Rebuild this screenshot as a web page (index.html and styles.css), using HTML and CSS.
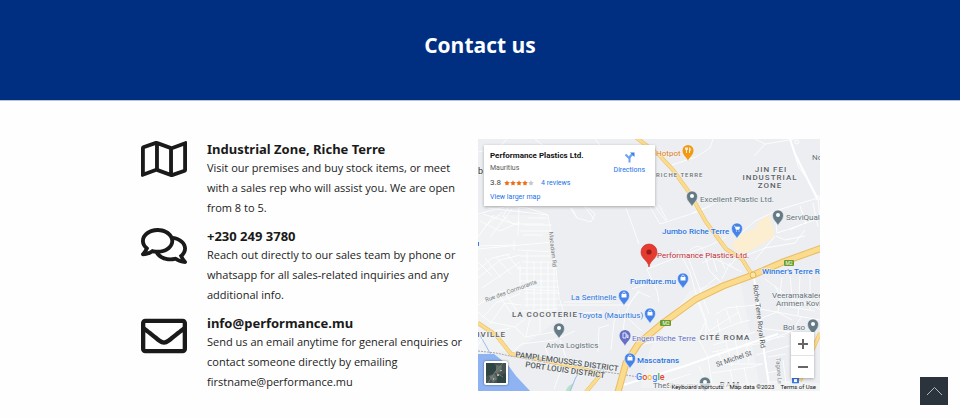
FILE: index.html
```
<!DOCTYPE html>
<html lang="en">
<head>
<meta charset="utf-8">
<meta name="viewport" content="width=device-width, initial-scale=1">
<title>Contact us</title>
<link rel="stylesheet" href="styles.css">
</head>
<body>
<header class="banner"><h1>Contact us</h1></header>
<main class="contact">
  <div class="details">
    <section class="item">
      <svg class="icon" viewBox="0 32 576 448" aria-hidden="true"><path d="M560.02 32c-1.96 0-3.98.37-5.96 1.16L384.01 96H384L212 35.28A64.252 64.252 0 0 0 191.76 32c-6.69 0-13.37 1.05-19.81 3.14L20.12 87.95A32.006 32.006 0 0 0 0 117.66v346.32C0 473.17 7.53 480 15.99 480c1.96 0 3.97-.37 5.96-1.16L192 416l172 60.71a63.98 63.98 0 0 0 40.05.15l151.83-52.81A31.996 31.996 0 0 0 576 394.34V48.02c0-9.19-7.53-16.02-15.98-16.02zM224 90.42l128 45.19v285.97l-128-45.19V90.42zM48 418.05V129.07l128-44.53v286.2l-.64.23L48 418.05zm480-35.13l-128 44.53V141.26l.64-.24L528 93.95v288.97z"/></svg>
      <div class="text">
        <h2>Industrial Zone, Riche Terre</h2>
        <p>Visit our premises and buy stock items, or meet with a sales rep who will assist you. We are open from 8 to 5.</p>
      </div>
    </section>
    <section class="item">
      <svg class="icon" viewBox="0 32 576 448" aria-hidden="true"><path d="M532 386.2c27.5-27.1 44-61.1 44-98.2 0-80-76.5-146.1-176.2-157.9C368.3 72.5 294.3 32 208 32 93.1 32 0 103.6 0 192c0 37 16.5 71 44 98.2-15.3 30.7-37.3 54.5-37.7 54.9-6.3 6.7-8.1 16.5-4.4 25 3.6 8.5 12 14 21.2 14 53.5 0 96.7-20.2 125.2-38.8 9.2 2.1 18.7 3.7 28.4 4.9C208.1 407.6 281.8 448 368 448c20.8 0 40.8-2.4 59.8-6.8C456.3 459.7 499.4 480 553 480c9.2 0 17.5-5.5 21.2-14 3.6-8.5 1.9-18.3-4.4-25-.4-.3-22.5-24.1-37.8-54.8zm-392.8-92.3L122.1 305c-14.1 9.1-28.5 16.3-43.1 21.4 2.7-4.7 5.4-9.7 8-14.8l15.5-31.1L77.7 256C64.2 242.6 48 220.7 48 192c0-60.7 73.3-112 160-112s160 51.3 160 112-73.3 112-160 112c-16.5 0-33-1.9-49-5.6l-19.8-4.5zM498.3 352l-24.7 24.4 15.5 31.1c2.6 5.1 5.3 10.1 8 14.8-14.6-5.1-29-12.3-43.1-21.4l-17.1-11.1-19.9 4.6c-16 3.7-32.5 5.6-49 5.6-54 0-102.2-20.1-131.3-49.7C338 339.5 416 272.9 416 192c0-3.4-.4-6.7-.7-10C479.7 196.5 528 238.8 528 288c0 28.7-16.2 50.6-29.7 64z"/></svg>
      <div class="text">
        <h2>+230 249 3780</h2>
        <p>Reach out directly to our sales team by phone or whatsapp for all sales-related inquiries and any additional info.</p>
      </div>
    </section>
    <section class="item">
      <svg class="icon icon-mail" viewBox="0 64 512 384" aria-hidden="true"><path d="M464 64H48C21.49 64 0 85.49 0 112v288c0 26.51 21.49 48 48 48h416c26.51 0 48-21.49 48-48V112c0-26.51-21.49-48-48-48zm0 48v40.805c-22.422 18.259-58.168 46.651-134.587 106.49-16.841 13.247-50.201 45.072-73.413 44.701-23.208.375-56.579-31.459-73.413-44.701C106.18 199.465 70.425 171.067 48 152.805V112h416zM48 400V214.398c22.914 18.251 55.409 43.862 104.938 82.646 21.857 17.205 60.134 55.186 103.062 54.955 42.717.231 80.509-37.199 103.053-54.947 49.528-38.783 82.032-64.401 104.947-82.653V400H48z"/></svg>
      <div class="text">
        <h2>info@performance.mu</h2>
        <p>Send us an email anytime for general enquiries or contact someone directly by emailing firstname@performance.mu</p>
      </div>
    </section>
  </div>

  <div class="map">
    <svg class="map-canvas" viewBox="478 139 342 252" preserveAspectRatio="xMidYMid slice" role="img" aria-label="Map of Riche Terre, Mauritius">
      <defs>
        <g id="pin"><path d="M0 9C-1 5-5.500 3.500-5.500-1.500a5.500 5.500 0 0 1 11 0C5.500 3.500 1 5 0 9z"/></g>
        <g id="bag" fill="#fff"><path d="M-2.500-2h5v3.500h-5z"/><path d="M-1.300-2v-.6a1.300 1.300 0 0 1 2.600 0v.6" fill="none" stroke="#fff" stroke-width=".7"/></g>
      </defs>
      <rect x="478" y="139" width="342" height="252" fill="#eceef1"/>
      <path d="M478 215h70l8 60 2 45-40 30-40 4zM690 290l50-12 20 110h-120l10-40z" fill="#f0f2f3"/>
      <path d="M739 235l17-7 1-5 12-9 5 17 0 6-29 17-6-2-8-6z" fill="#fbeed1"/>
      <path d="M478 354h16l14 11 8 11 15 16h-53z" fill="#8fb3f2"/>
      <path d="M566 391c1-5 4-6 8-8l-3 8z" fill="#b9e3c8"/>
      <path class="stream" d="M478 332l7 12 6 11M604 370l-18-6-10 13-6 14"/>

      <g class="street">
        <path d="M478 152l20-4 9-9M535 139l10 8M595 139l5 6M478 214l30-8 20 2 20 7 2 12 5 33 4 38M548 215l-60-7M519 206l-1 30M509 206l-6 10 10 8 30 0M478 237l16-22M483 214l35 11M480 221l20 10 20-9M485 226l18-14M490 237l22-28M528 218l18 0M524 225l28 0M520 231l32 0M523 235l20 0M478 249l75-7M478 246l36-1M514 241v9"/>
        <path d="M518 250l37 2M520 256h34M522 262h34M517 268h40M519 274h38M519 281h39M521 287h38M524 293h36M524 299h36M524 305h36M520 265v28M527 252v55M534 262v48M541 262v52M548 262v50M554 252v58M522 311l36-2"/>
        <path d="M478 270l14-12 18-4M478 278l22-18 20-5M482 288l38-26M478 262l14 14M485 258l16 20M496 257l15 17M507 255l14 16M478 305l20-13 20-3 40 2M482 318l15-16 23-8M490 324l15-21 17 2M478 312l12 10 25 5 10-8M498 294l14 20M504 292l14 20M515 327l10 10 35-6 4-18M530 318l-4 18M540 313v20M560 300l4 14 38-2M564 302h46M559 305h70l10-15"/>
        <path d="M570 208l7 10 14 4 4-8-9-8M577 218l-5-10M584 206l10 13M626 208l8 22 5 14 0 0-2-4M650 207l10 17 40-13 22-12M667 220l-8-15M710 206l-18 7M672 165l24-8 14-9 3-9M652 202l14 19M647 269l42-16 22-8 15-8M647 269l10 22 2 11M652 282l-20 7M678 250l12 22 6 22 10 26 0 15M687 254l22 60M690 250c6-5 12-5 14 2l5 18 10 10M702 263l11-5 20 9M713 258l4 14M719 255l6 14M730 263l-8 16M701 290l15-12M724 286l-13-14M650 297l-11-5-8 9-6 14-3 25"/>
        <path d="M795 139l-30 5-11 12M765 144l-10-5M792 144l6 22 10 14 10 18M818 198l-40 12-23 11-16 14M818 198l2 20M775 213l2 20 24-8M790 230l10-5 18-6M742 257l23-9 10-12M755 260l10-12 30-5 10-13M776 236l9 4 20-4M800 206l6 18M813 203l5 24M740 253l-10 13 12 6"/>
        <path d="M598 352l1-24 10-3M611 350l3-28 5-12M622 313l20 18M640 345l46-10M697 300l12 31 30-19M706 320l-6 14M716 314l10-6 30-3M708 335l30-12 12-3M713 345l30-9 12-4M717 319l3 13M726 309l5 14M736 305l6 18M699 340l9 17 5 34M708 357l-18 7-70 22M690 374l-30 10M699 366l9 20M717 350l6 14 40 0M712 352l50-9M735 338l4 25M726 342l6 24M745 333l4 30M712 373l40-6 10-3M730 369l5 22M744 367l5 24M762 343l30-12 10-15M757 320l20-8 15 8M756 355l36-10M758 328l34 4"/>
        <path d="M754 279l6 40 4 34 6 38M765 279l24 18 31 12M775 286l10 20 30 5M782 277l-4 35M790 276l3 30M800 276l-2 40M810 270v40M760 309l60 11M765 340l20-4M768 357l18-3M766 373l12-2M783 360l4 31M770 382h20M562 367l-8 22M478 345l8-12 24-5M511 354l10-10 34-4 20-9M560 340l8 24M545 346l5 16"/>
      </g>
      <path class="avenue" d="M754 278l5 31 6 50 5 32M620 386l65-20 28-10 35-12 30-10M790 139l5 15 13 26 9 18"/>
      <circle cx="797" cy="142" r="2" fill="none" stroke="#fff"/><circle cx="818" cy="198" r="2" fill="none" stroke="#fff"/>
      <path class="boundary" d="M478 351l18 2 14 3 40 7 36 6 34 5 24 4"/>

      <g class="road-edge">
        <path d="M478 323l18 12 15 19 32 6 33 7 25 7-15 18M820 333l-8 18-12 30M634 136l24 18 15 16 16 22 17 30 20 27 16 10 10 16"/>
        <path class="trunk" d="M822 248l-39 14-30 13-30 11-27 13-33 24-24 20-13 20-8 29"/>
      </g>
      <g class="road">
        <path d="M478 323l18 12 15 19 32 6 33 7 25 7-15 18M820 333l-8 18-12 30M634 136l24 18 15 16 16 22 17 30 20 27 16 10 10 16"/>
        <path class="trunk" d="M822 248l-39 14-30 13-30 11-27 13-33 24-24 20-13 20-8 29"/>
      </g>
      <circle cx="753" cy="275" r="3" fill="#f8e4ad" stroke="#e8b64c"/>

      <g class="shield"><rect x="784" y="260" width="10" height="6" rx="1"/><text x="789" y="265">M2</text><rect x="660" y="320" width="11" height="6" rx="1"/><text x="666" y="325">M2</text></g>

      <g class="area">
        <text x="771" y="172">JIN FEI</text><text x="770" y="180">INDUSTRIAL</text><text x="770" y="188">ZONE</text>
        <text x="545" y="317">LA COCOTERIE</text><text x="725" y="340">CITÉ ROMA</text><text x="490" y="337">HVILLE</text><text x="730" y="387">RAM</text>
      </g>
      <text class="village" x="656" y="177">RICHE TERRE</text>
      <text class="district" x="515" y="357" transform="rotate(8 515 357)">PAMPLEMOUSSES DISTRICT</text>
      <text class="district" x="525" y="367" transform="rotate(8 525 367)">PORT LOUIS DISTRICT</text>
      <text class="street-name" x="549" y="232" transform="rotate(84 549 232)">Macadam Rd</text>
      <text class="street-name" x="486" y="302" transform="rotate(-20 486 302)">Rue des Cormorants</text>
      <text class="street-name large" x="753" y="285" transform="rotate(83 753 285)">Riche Terre Royal Rd</text>
      <text class="street-name large" x="717" y="367" transform="rotate(-19 717 367)">St Michel St</text>
      <text class="street-name" x="776" y="358" transform="rotate(86 776 358)">Tagore Ln</text>

      <g class="place grey">
        <text x="700" y="202">Excellent Plastic Ltd.</text><text x="786" y="220">ServiQual</text><text x="546" y="348">Ariva Logistics</text>
        <text x="772" y="298">Veeramakaleeamen</text><text x="776" y="306">Ammen Kovil</text><text x="783" y="330">Bol so</text><text x="653" y="388">TheShop mu</text>
        <text x="812" y="160">No</text>
      </g>
      <g class="place orange"><text x="656" y="156">Hotpot</text></g>
      <g class="place blue">
        <text x="662" y="234">Jumbo Riche Terre</text><text x="630" y="284">Furniture.mu</text><text class="light" x="571" y="300">La Sentinelle</text>
        <text class="light" x="578" y="318">Toyota (Mauritius)</text><text x="637" y="363">Mascatrans</text><text x="762" y="274">Winner's Terre Rouge</text>
      </g>
      <g class="place violet"><text x="632" y="341">Engen Riche Terre</text></g>
      <g class="place red"><text x="657" y="258">Performance Plastics Ltd.</text></g>
      <text class="edge-text" x="478" y="174">b</text>

      <g fill="#647b86" stroke="#fff" stroke-width=".5">
        <use href="#pin" x="692" y="198"/><use href="#pin" x="778" y="217"/><use href="#pin" x="559" y="330"/><use href="#pin" x="813" y="326"/><use href="#pin" x="705" y="384"/>
      </g>
      <g fill="#fff"><circle cx="692" cy="196" r="2"/><circle cx="778" cy="215" r="2"/><circle cx="559" cy="328" r="2"/><circle cx="813" cy="324" r="2"/><circle cx="705" cy="382" r="2"/></g>
      <use href="#pin" x="688" y="152" fill="#f29a10"/>
      <path d="M686.500 147.500v5.500M685.500 147.500v2h2v-2M689.500 147.500v5.500M689.500 148c1.500 0 1.500 3 0 3" fill="none" stroke="#fff" stroke-width=".8"/>
      <g fill="#4683e8" stroke="#fff" stroke-width=".5">
        <use href="#pin" x="737" y="230"/><use href="#pin" x="683" y="280"/><use href="#pin" x="624" y="297"/><use href="#pin" x="650" y="315"/><use href="#pin" x="630" y="360"/>
      </g>
      <path d="M734 226h1l1 3.500h3l.8-2.500H736" fill="#fff" stroke="#fff" stroke-width=".6"/><circle cx="736.500" cy="231" r=".6" fill="#fff"/><circle cx="739" cy="231" r=".6" fill="#fff"/>
      <use href="#bag" x="683" y="279"/><use href="#bag" x="624" y="296"/><use href="#bag" x="650" y="314"/><use href="#bag" x="630" y="359"/>
      <use href="#pin" x="625" y="337" fill="#6570c8"/>
      <path d="M623 333h3v5h-3zM627 334v3l1 1v-3" fill="none" stroke="#fff" stroke-width=".8"/>
      <path d="M649 267c-1-7-8-8-8-15a8 8 0 0 1 16 0c0 7-7 8-8 15z" fill="#e53b30" stroke="#c5281f" stroke-width=".6"/><circle cx="649" cy="252" r="2.600" fill="#951d17"/>
      <rect x="792" y="377" width="7" height="7" rx="1" fill="#3c79e6"/><path d="M794 379h3v3h-3z" fill="#fff"/>
      <path d="M478 242v4" stroke="#3c79e6" stroke-width="2"/>
      <text class="google" x="636" y="380"><tspan fill="#4285f4">G</tspan><tspan fill="#ea4335">o</tspan><tspan fill="#fbbc05">o</tspan><tspan fill="#4285f4">g</tspan><tspan fill="#34a853">l</tspan><tspan fill="#ea4335">e</tspan></text>
    </svg>

    <div class="card">
      <div class="card-main">
        <strong>Performance Plastics Ltd.</strong>
        <span class="address">Mauritius</span>
        <div class="rating">
          <span class="score">3.8</span>
          <svg class="stars" viewBox="0 0 60 12" role="img" aria-label="3.8 out of 5 stars">
            <defs><path id="star" d="M6 .5l1.700 3.600 3.900.5-2.900 2.700.8 3.900L6 9.300l-3.500 1.900.8-3.900L.4 4.600l3.900-.5z"/></defs>
            <g fill="#e7711b"><use href="#star"/><use href="#star" x="12"/><use href="#star" x="24"/><use href="#star" x="36"/></g><use href="#star" x="48" fill="#c4c8cc"/>
          </svg>
          <a href="#reviews">4 reviews</a>
        </div>
        <a href="#larger">View larger map</a>
      </div>
      <a class="directions" href="#directions">
        <svg viewBox="0 0 22 22" aria-hidden="true"><path d="M11 21v-8L3 5M11 13c0-4 2-6 6-8" fill="none" stroke="#6ba2f3" stroke-width="4"/><path d="M12 1h9v9z" fill="#3e7fe0"/></svg>
        Directions
      </a>
    </div>

    <button class="satellite" type="button" aria-label="Show satellite imagery">
      <svg viewBox="0 0 20 20" aria-hidden="true"><path fill="#46524f" d="M0 0h20v20H0z"/><path fill="#2f4544" d="M0 0h8l3 6-4 5-7 2zM12 13l8-3v10h-9z"/><path fill="#66706b" d="M10 2l6 1-1 6-5 1zM3 13l6-2 2 5-4 4z"/><path d="M2 20L9 9l8-9M9 9l8 5M4 14l6 2" fill="none" stroke="#7d8785" stroke-width=".7"/><path fill="#b4aca7" d="M11 11h2v2h-2zM14 7h2v1h-2zM7 15h1v2H7z"/></svg>
    </button>

    <div class="zoom">
      <button type="button" aria-label="Zoom in"><svg viewBox="0 0 12 12" aria-hidden="true"><path d="M6 1v10M1 6h10"/></svg></button>
      <button type="button" aria-label="Zoom out"><svg viewBox="0 0 12 12" aria-hidden="true"><path d="M1 6h10"/></svg></button>
    </div>

    <div class="legal"><button type="button">Keyboard shortcuts</button><span>Map data ©2023</span><a href="#terms">Terms of Use</a></div>
  </div>
</main>
<button class="to-top" type="button" aria-label="Back to top"><svg viewBox="0 0 28 28" aria-hidden="true"><path d="M7 18l7.500-7.500L22 18"/></svg></button>
</body>
</html>
```
FILE: styles.css
```
* { box-sizing: border-box; }

body {
  margin: 0;
  background: #fefefe;
  color: #1a1a1a;
  font-family: "Segoe UI", "Open Sans", "Noto Sans", sans-serif;
}

button { padding: 0; border: 0; font: inherit; color: inherit; cursor: pointer; }
a { color: #1a73e8; text-decoration: none; }

.banner {
  display: flex;
  align-items: center;
  justify-content: center;
  padding: 30px 20px 40px;
  background: #002f82;
  border-bottom: 1px solid #b9c3de;
}
.banner h1 { margin: 0; color: #fff; font-size: 21px; line-height: 30px; font-weight: 700; }

.contact {
  display: grid;
  grid-template-columns: minmax(0, 1fr) minmax(0, 342px);
  align-items: start;
  max-width: 960px;
  margin: 0 auto;
  padding: 38px 140px 26px 141px;
}

.details { display: grid; gap: 9px; padding: 1px 12px 0 0; }
.item { display: flex; align-items: flex-start; gap: 20px; }
.icon { flex: none; width: 46px; height: 36px; margin-top: 1px; fill: #1a1a1a; }
.icon-mail { margin-top: 4px; }
.text h2 { margin: 0; font-family: "Segoe UI", "Noto Sans", sans-serif; font-size: 13px; line-height: 18px; font-weight: 700; }
.text p { margin: 0; font-size: 11px; line-height: 20px; color: #222; }

.map {
  position: relative;
  overflow: hidden;
  font-family: Roboto, "Liberation Sans", sans-serif;
  font-size: 7px;
}
.map-canvas { display: block; width: 100%; height: auto; font-family: Roboto, sans-serif; }

.street { fill: none; stroke: #fff; stroke-width: 1; opacity: .85; }
.avenue { fill: none; stroke: #fff; stroke-width: 2; }
.stream { fill: none; stroke: #9dbcf3; stroke-width: 1; }
.boundary { fill: none; stroke: #a3a7ab; stroke-width: 1; stroke-dasharray: 2 1; }
.road-edge { fill: none; stroke: #e9bd62; stroke-width: 4; }
.road { fill: none; stroke: #fbdb8e; stroke-width: 3; }
.road-edge .trunk { stroke-width: 7; }
.road .trunk { stroke-width: 5; }
.shield { fill: #6a9c2f; }
.shield text { fill: #fff; font-size: 5px; text-anchor: middle; }

.map-canvas text { paint-order: stroke; stroke: #f4f6f7; stroke-width: 1px; stroke-linejoin: round; }
.map-canvas .shield text { stroke: none; }
.area { fill: #5b6066; font-size: 8px; font-weight: 500; letter-spacing: 1px; text-anchor: middle; }
.village { fill: #6a6f75; font-size: 6px; font-weight: 500; letter-spacing: 1px; }
.district { fill: #55595e; font-size: 8px; font-weight: 500; }
.street-name { fill: #74787d; font-size: 6px; }
.street-name.large { fill: #505459; font-size: 7px; }
.place { font-size: 8px; }
.grey { fill: #647079; }
.orange { fill: #e07b13; }
.blue { fill: #2a74e0; font-weight: 500; }
.light { font-weight: 400; }
.violet { fill: #6570c8; }
.red { fill: #c52c35; }
.edge-text { fill: #333; font-size: 9px; }
.google { font-size: 9px; font-weight: 500; }

.card {
  position: absolute;
  top: 6px;
  left: 6px;
  display: flex;
  justify-content: space-between;
  width: 50%;
  padding: 5px 10px 2px 6px;
  background: #fff;
  box-shadow: 0 1px 3px rgb(0 0 0 / 30%);
}
.card-main { display: grid; line-height: 13px; }
.card-main strong { font-size: 8px; font-weight: 700; color: #111; line-height: 12px; }
.address { color: #5b5b5b; }
.rating { display: flex; align-items: center; gap: 3px; line-height: 16px; }
.rating a { margin-left: 4px; }
.score { font-size: 8px; color: #444; }
.stars { width: 30px; height: 6px; }
.directions { display: flex; flex-direction: column; align-items: center; gap: 3px; line-height: 9px; padding-top: 2px; }
.directions svg { width: 11px; height: 11px; }

.satellite {
  position: absolute;
  left: 6px;
  bottom: 6px;
  width: 24px;
  height: 24px;
  border: 2px solid #fff;
  border-radius: 2px;
  overflow: hidden;
  box-shadow: 0 0 2px rgb(0 0 0 / 60%);
}
.satellite svg { display: block; width: 100%; height: 100%; }

.zoom {
  position: absolute;
  right: 6px;
  bottom: 13px;
  display: grid;
  width: 23px;
  background: #fff;
  box-shadow: 0 1px 3px rgb(0 0 0 / 30%);
}
.zoom button { display: grid; place-items: center; height: 23px; background: none; }
.zoom button + button { border-top: 1px solid #e3e3e3; }
.zoom svg { width: 12px; height: 12px; fill: none; stroke: #666; stroke-width: 2; }

.legal {
  position: absolute;
  right: 0;
  bottom: 0;
  display: flex;
  gap: 6px;
  padding: 0 4px 0 2px;
  line-height: 8px;
  font-size: 6px;
  color: #111;
  background: rgb(245 245 245 / 70%);
}
.legal button { background: none; }
.legal a { color: inherit; }

.to-top {
  position: fixed;
  right: 12px;
  bottom: 13px;
  width: 28px;
  height: 28px;
  background: #2b333d;
}
.to-top svg { display: block; width: 28px; height: 28px; fill: none; stroke: #b4b8bc; stroke-width: 1; }

@media (max-width: 800px) {
  .contact { grid-template-columns: minmax(0, 1fr); gap: 30px; padding: 38px 20px 26px; }
}
```
